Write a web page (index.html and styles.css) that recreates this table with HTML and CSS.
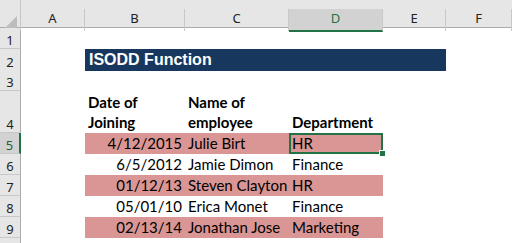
FILE: index.html
```html
<!DOCTYPE html>
<html lang="en">
<head>
  <meta charset="UTF-8">
  <title>ISODD Function</title>
  <link rel="stylesheet" href="styles.css">
</head>
<body>
  <div class="sheet">
    <div class="row head">
      <div class="corner"><span class="tri"></span></div>
      <div class="col">A</div>
      <div class="col">B</div>
      <div class="col">C</div>
      <div class="col active">D</div>
      <div class="col">E</div>
      <div class="col">F</div>
    </div>

    <div class="row">
      <div class="num">1</div>
      <div></div><div></div><div></div><div></div><div></div><div></div>
    </div>

    <div class="row">
      <div class="num">2</div>
      <div></div>
      <div class="title">ISODD Function</div>
      <div></div>
    </div>

    <div class="row">
      <div class="num">3</div>
      <div></div><div></div><div></div><div></div><div></div><div></div>
    </div>

    <div class="row tall">
      <div class="num">4</div>
      <div></div>
      <div class="cell bold">Date of<br>Joining</div>
      <div class="cell bold">Name of<br>employee</div>
      <div class="cell bold">Department</div>
      <div></div><div></div>
    </div>

    <div class="row pink">
      <div class="num active">5</div>
      <div></div>
      <div class="cell date">4/12/2015</div>
      <div class="cell">Julie Birt</div>
      <div class="cell selected">HR<span class="handle"></span></div>
      <div></div><div></div>
    </div>

    <div class="row">
      <div class="num">6</div>
      <div></div>
      <div class="cell date">6/5/2012</div>
      <div class="cell">Jamie Dimon</div>
      <div class="cell">Finance</div>
      <div></div><div></div>
    </div>

    <div class="row pink">
      <div class="num">7</div>
      <div></div>
      <div class="cell date">01/12/13</div>
      <div class="cell">Steven Clayton</div>
      <div class="cell">HR</div>
      <div></div><div></div>
    </div>

    <div class="row">
      <div class="num">8</div>
      <div></div>
      <div class="cell date">05/01/10</div>
      <div class="cell">Erica Monet</div>
      <div class="cell">Finance</div>
      <div></div><div></div>
    </div>

    <div class="row pink">
      <div class="num">9</div>
      <div></div>
      <div class="cell date">02/13/14</div>
      <div class="cell">Jonathan Jose</div>
      <div class="cell">Marketing</div>
      <div></div><div></div>
    </div>

    <div class="row">
      <div class="num"></div>
      <div></div><div></div><div></div><div></div><div></div><div></div>
    </div>
  </div>
</body>
</html>
```

FILE: styles.css
```css
body {
  margin: 0;
  background: #fff;
  font-family: "Lato", "Liberation Sans", sans-serif;
  font-size: 15px;
  color: #000;
  overflow: hidden;
}
.sheet {
  width: 512px;
  height: 243px;
  overflow: hidden;
}
.row {
  display: grid;
  grid-template-columns: 21px 64px 100px 104px 94px 63px 66px;
  height: 21px;
}
.row.head {
  height: 28px;
  background: #e6e6e6;
  border-bottom: 1px solid #ababab;
  box-sizing: border-box;
}
.row.tall {
  height: 42px;
}
.corner {
  position: relative;
  border-right: 1px solid #c8c8c8;
}
.tri {
  position: absolute;
  right: 3px;
  bottom: 3px;
  width: 0;
  height: 0;
  border-left: 12px solid transparent;
  border-bottom: 12px solid #bdbdbd;
}
.col {
  display: flex;
  align-items: flex-end;
  justify-content: center;
  padding-bottom: 4px;
  font-family: "Noto Sans", sans-serif;
  font-size: 13px;
  color: #222;
  border-right: 1px solid #c8c8c8;
  margin-top: 9px;
}
.col.active {
  background: #d2d2d2;
  border-bottom: 2px solid #217346;
  color: #217346;
  margin-bottom: -1px;
  padding-bottom: 3px;
}
.num {
  display: flex;
  align-items: flex-end;
  justify-content: center;
  padding-bottom: 1px;
  background: #e6e6e6;
  border-right: 1px solid #ababab;
  border-bottom: 1px solid #c8c8c8;
  box-sizing: border-box;
  font-family: "Noto Sans", sans-serif;
  font-size: 13px;
  color: #222;
  line-height: 1;
}
.num.active {
  background: #d2d2d2;
  border-right: 2px solid #217346;
  color: #2a5a40;
}
.title {
  grid-column: 3 / 7;
  background: #17375e;
  color: #fff;
  font-family: "Liberation Sans Narrow", "Liberation Sans", sans-serif;
  font-weight: bold;
  font-size: 16px;
  line-height: 22px;
  padding-left: 4px;
  height: 22px;
}
.cell {
  display: flex;
  align-items: flex-end;
  padding: 0 3px 1px;
  line-height: 20px;
  white-space: nowrap;
}
.cell.bold {
  font-weight: bold;
}
.cell.date {
  justify-content: flex-end;
}
.pink > .cell {
  background: #da9694;
}
.cell.selected {
  position: relative;
  outline: 2px solid #217346;
  outline-offset: -2px;
  padding-left: 3px;
}
.handle {
  position: absolute;
  right: -3px;
  bottom: -3px;
  width: 5px;
  height: 5px;
  background: #217346;
  border: 1px solid #fff;
}
```
